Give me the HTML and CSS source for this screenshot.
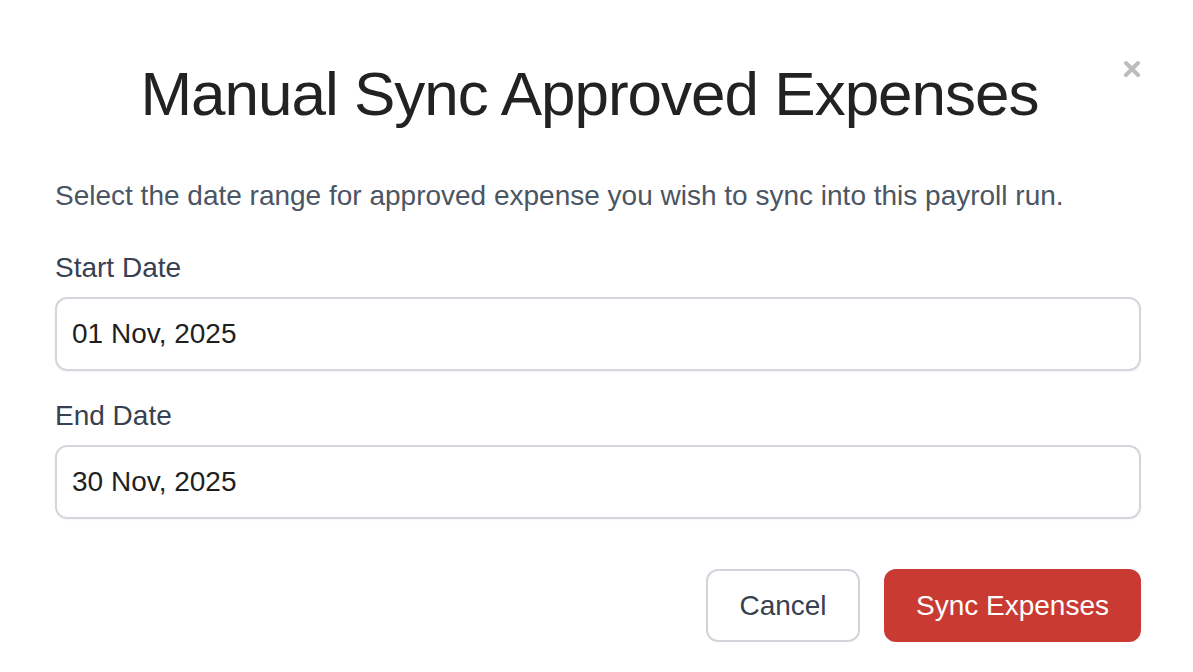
FILE: index.html
```html
<!DOCTYPE html>
<html>
<head>
<meta charset="utf-8">
<link rel="stylesheet" href="styles.css">
</head>
<body>
<div class="modal">
  <div class="header">
    <h1 class="title">Manual Sync Approved Expenses</h1>
    <button class="close" aria-label="Close">
      <svg width="18" height="18" viewBox="0 0 18 18"><path d="M3 3 L15 15 M15 3 L3 15" stroke="#bdbdbd" stroke-width="4" stroke-linecap="round"/></svg>
    </button>
  </div>
  <p class="desc">Select the date range for approved expense you wish to sync into this payroll run.</p>
  <div class="field">
    <label class="label">Start Date</label>
    <div class="input">01 Nov, 2025</div>
  </div>
  <div class="field">
    <label class="label">End Date</label>
    <div class="input">30 Nov, 2025</div>
  </div>
  <div class="actions">
    <button class="btn btn-cancel">Cancel</button>
    <button class="btn btn-primary">Sync Expenses</button>
  </div>
</div>
</body>
</html>
```

FILE: styles.css
```css
html, body {
  margin: 0;
  padding: 0;
  background: #ffffff;
  font-family: "Liberation Sans", Arial, Helvetica, sans-serif;
}
.modal {
  padding: 56px 52px 0 55px;
}
.header {
  display: flex;
  align-items: flex-start;
}
.title {
  flex: 1;
  margin: 0;
  padding-top: 2px;
  text-align: center;
  font-size: 62px;
  letter-spacing: -1px;
  font-weight: 400;
  color: #222222;
  line-height: 72px;
}
.close {
  border: none;
  background: none;
  padding: 0;
  margin-top: 4px;
  width: 17px;
  height: 18px;
  display: flex;
}
.close svg {
  margin-left: -1px;
}
.desc {
  margin: 46px 0 0 0;
  font-size: 28px;
  line-height: 40px;
  color: #4b5563;
}
.field {
  margin-top: 32px;
}
.field + .field {
  margin-top: 25px;
}
.label {
  display: block;
  font-size: 28px;
  line-height: 40px;
  color: #374151;
  margin-bottom: 9px;
}
.input {
  height: 74px;
  box-sizing: border-box;
  border: 2px solid #d4d6dc;
  border-radius: 12px;
  padding: 0 15px;
  display: flex;
  align-items: center;
  font-size: 28px;
  color: #1f1f1f;
  box-shadow: 0 1px 2px rgba(0,0,0,0.05);
}
.actions {
  display: flex;
  justify-content: flex-end;
  gap: 24px;
  margin-top: 50px;
}
.btn {
  height: 73px;
  border-radius: 12px;
  font-family: "Liberation Sans", Arial, Helvetica, sans-serif;
  font-size: 28px;
  padding: 0;
  cursor: pointer;
}
.btn-cancel {
  background: #ffffff;
  border: 2px solid #d1d5db;
  color: #374151;
  width: 154px;
}
.btn-primary {
  background: #c93a32;
  border: none;
  color: #ffffff;
  width: 257px;
}
```
